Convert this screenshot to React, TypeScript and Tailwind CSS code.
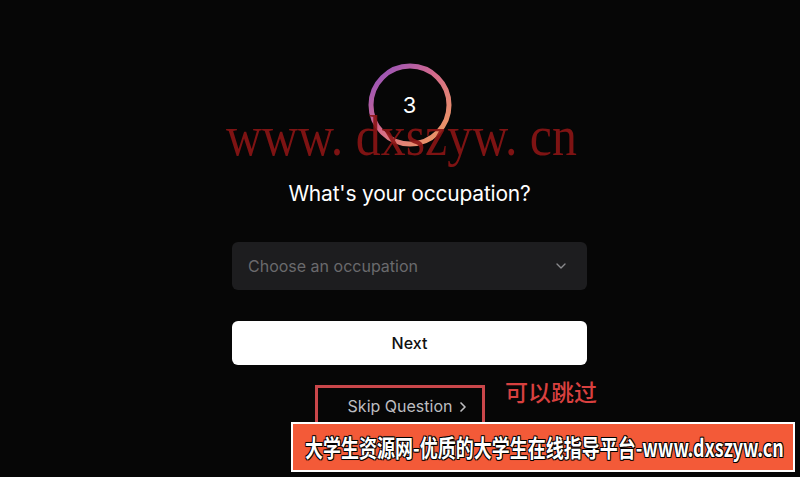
import React from "react";
import { ChevronDown, ChevronRight } from "lucide-react";

// step counter ring with gradient stroke
const StepRing = ({ step }: { step: number }) => (
  <div className="relative w-[84px] h-[84px] flex items-center justify-center">
    <svg width="84" height="84" viewBox="0 0 84 84" className="absolute inset-0">
      <defs>
        <linearGradient id="ringGrad" x1="0" y1="0" x2="1" y2="1">
          <stop offset="0%" stopColor="#8a4fc4" />
          <stop offset="45%" stopColor="#d46a8c" />
          <stop offset="100%" stopColor="#f2a05c" />
        </linearGradient>
      </defs>
      <circle cx="42" cy="42" r="39" fill="none" stroke="url(#ringGrad)" strokeWidth="5" />
    </svg>
    <span className="relative text-white text-[22px] leading-none">{step}</span>
  </div>
);

export default function App() {
  return (
    <div
      className="relative w-full h-[477px] overflow-hidden bg-[#060606]"
      style={{ fontFamily: "Inter, 'Noto Sans', sans-serif" }}
    >
      <div className="flex flex-col items-center pt-[63px] pl-[19px]">
        <StepRing step={3} />

        <h1 className="mt-[33px] text-white text-[21px] leading-[28px] tracking-[-0.2px]">
          What's your occupation?
        </h1>

        <button className="mt-[34px] w-[355px] h-[48px] rounded-[6px] bg-[#1d1d1f] flex items-center justify-between pl-4 pr-[18px]">
          <span className="text-[#6a6a6d] text-[16px]">Choose an occupation</span>
          <ChevronDown className="w-4 h-4 text-[#8a8a8d]" strokeWidth={2} />
        </button>

        <button className="mt-[31px] w-[355px] h-[44px] rounded-[6px] bg-white text-[#111] text-[16px] font-medium">
          Next
        </button>

        <button className="mt-[31px] flex items-center gap-[3px] text-[#bdbdc0] text-[16px] leading-5">
          Skip Question
          <ChevronRight className="w-4 h-4 mt-[2px]" strokeWidth={2.5} />
        </button>
      </div>

      {/* site watermark */}
      <div
        className="absolute left-[226px] top-[106px] text-[#8c1515] text-[58px] leading-[60px] whitespace-pre origin-left scale-x-[0.86] opacity-90 pointer-events-none"
        style={{ fontFamily: "'Liberation Serif', serif" }}
      >
        www. dxszyw. cn
      </div>

      {/* skip highlight */}
      <div className="absolute left-[315px] top-[385px] w-[170px] h-[44px] border-[3px] border-[#c9464a]" />
      <div
        className="absolute left-[505px] top-[375px] text-[#d8403f] text-[23px] leading-[32px] font-medium"
        style={{ fontFamily: "'Noto Sans CJK SC', sans-serif" }}
      >
        可以跳过
      </div>

      {/* bottom banner */}
      <div className="absolute left-[291px] top-[422px] w-[504px] h-[50px] bg-[#f35a38] border-2 border-white flex items-center overflow-hidden">
        <span
          className="ml-[12px] whitespace-nowrap text-white text-[24px] leading-none font-bold origin-left scale-x-[0.75] [text-shadow:1px_1px_0_#000,-1px_-1px_0_#000,1px_-1px_0_#000,-1px_1px_0_#000,0_0_2px_#000]"
          style={{ fontFamily: "'Noto Sans CJK SC', sans-serif" }}
        >
          大学生资源网-优质的大学生在线指导平台-www.dxszyw.cn
        </span>
      </div>
    </div>
  );
}
